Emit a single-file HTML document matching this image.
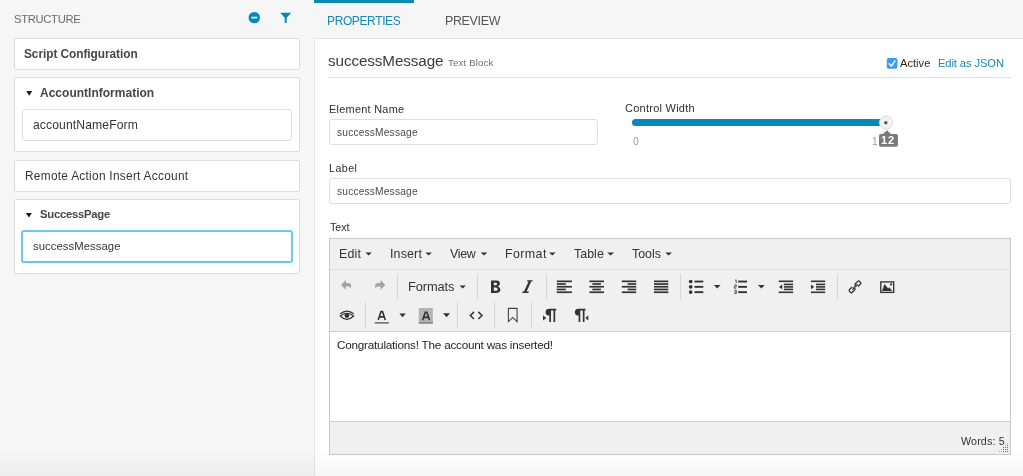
<!DOCTYPE html>
<html><head><meta charset="utf-8">
<style>
*{box-sizing:border-box;margin:0;padding:0}
html,body{width:1023px;height:476px;overflow:hidden;background:#f6f6f6;font-family:"Liberation Sans",sans-serif;color:#333}
.b{position:absolute}
.t{position:absolute;white-space:nowrap;line-height:1;will-change:transform;font-family:"Liberation Sans",sans-serif}
.card{position:absolute;left:14px;width:286px;background:#fff;border:1px solid #dbdbdb;border-radius:2px}
.inp{position:absolute;background:#fff;border:1px solid #dedede;border-radius:3px}
svg.ov{position:absolute;left:0;top:0}
</style></head><body>

<!-- LEFT cards -->
<div class="card" style="top:38px;height:32px"></div>
<div class="card" style="top:77px;height:75px"></div>
<div class="inp" style="left:22px;top:109px;width:270px;height:32px"></div>
<div class="card" style="top:160px;height:32px"></div>
<div class="card" style="top:199px;height:75px"></div>
<div class="inp" style="left:21px;top:230px;width:272px;height:33px;border:2px solid #68cbee;border-radius:3px"></div>

<!-- RIGHT -->
<div class="b" style="left:314px;top:0;width:100px;height:3px;background:#0589b6"></div>
<div class="b" style="left:314px;top:38px;width:720px;height:450px;background:#fff;border:1px solid #e3e3e3"></div>
<div class="b" style="left:329px;top:77px;width:682px;height:1px;background:#dfdfdf"></div>

<div class="inp" style="left:329px;top:119px;width:269px;height:26px"></div>
<div class="inp" style="left:329px;top:178px;width:682px;height:26px"></div>

<div class="b" style="left:632px;top:119px;width:252px;height:7px;background:#0589b6;border-radius:3.5px"></div>

<!-- editor -->
<div class="b" style="left:329px;top:238px;width:682px;height:217px;background:#f0f0f0;border:1px solid #c9c9c9"></div>
<div class="b" style="left:330px;top:269px;width:680px;height:1px;background:#dedede"></div>
<div class="b" style="left:330px;top:331px;width:680px;height:91px;background:#fff;border-top:1px solid #cdcdcd;border-bottom:1px solid #cdcdcd"></div>

<svg class="ov" width="1023" height="476" viewBox="0 0 1023 476">
  <!-- structure icons -->
  <circle cx="254.3" cy="17.6" r="5.7" fill="#0589b6"/>
  <rect x="251.3" y="16.7" width="6" height="1.8" fill="#d8eef6"/>
  <path d="M280.2 12.8 H291.2 L286.7 17.8 V22.4 Q286.7 23 285.7 23 Q284.7 23 284.7 22.4 V17.8 Z" fill="#0589b6"/>
  <!-- triangles -->
  <path d="M26.2 91 H32.3 L29.25 95.7 Z" fill="#1e1e1e"/>
  <path d="M25.9 213.1 H31.9 L28.9 217.4 Z" fill="#1e1e1e"/>
  <!-- checkbox -->
  <rect x="886.8" y="58" width="10.7" height="10.8" rx="2" fill="#3d9bf7"/>
  <path d="M889.1 63.7 L891.4 66.1 L895 60.9" stroke="#fff" stroke-width="1.4" fill="none" stroke-linecap="round" stroke-linejoin="round"/>
  <!-- slider handle -->
  <circle cx="886" cy="122.6" r="6.6" fill="#f2f2f2" stroke="#d9d9d9" stroke-width="0.9"/>
  <circle cx="885.8" cy="122.8" r="1.75" fill="#5a5a5a"/>
  <path d="M879 136 Q879 134 881 134 H883 L887 130.2 L891 134 H896 Q898 134 898 136 V144.7 Q898 146.7 896 146.7 H881 Q879 146.7 879 144.7 Z" fill="#7a7a7a"/>

  <!-- menubar carets -->
  <g fill="#333">
    <path d="M365.4 252.6 H371.8 L368.6 255.4 Z"/>
    <path d="M425.4 252.6 H431.9 L428.65 255.4 Z"/>
    <path d="M480.7 252.6 H487.4 L484.05 255.4 Z"/>
    <path d="M549 252.6 H555.6 L552.3 255.4 Z"/>
    <path d="M607.2 252.6 H614 L610.6 255.4 Z"/>
    <path d="M665.3 252.6 H671.9 L668.6 255.4 Z"/>
    <!-- toolbar carets -->
    <path d="M459.5 285.4 H465.9 L462.7 288.4 Z"/>
    <path d="M713.8 284.9 H720.6 L717.2 288.6 Z"/>
    <path d="M758 284.9 H764.7 L761.35 288.6 Z"/>
    <path d="M399.3 313.5 H405.8 L402.55 317.3 Z"/>
    <path d="M443 313.3 H450 L446.5 317.2 Z"/>
  </g>
  <!-- separators -->
  <g fill="#d6d6d6">
    <rect x="397" y="274" width="1" height="26"/>
    <rect x="477" y="274" width="1" height="26"/>
    <rect x="546" y="274" width="1" height="26"/>
    <rect x="680" y="274" width="1" height="26"/>
    <rect x="837" y="274" width="1" height="26"/>
    <rect x="365" y="302" width="1" height="26"/>
    <rect x="457" y="302" width="1" height="26"/>
    <rect x="494" y="302" width="1" height="26"/>
    <rect x="531" y="302" width="1" height="26"/>
  </g>
  <!-- undo / redo -->
  <path d="M341 284.9 L345.8 279.9 V283.1 H348.4 Q351.1 283.3 351.1 285.8 V288.6 Q350.2 286.6 348 286.6 H345.8 V289.8 Z" fill="#a3a3a3"/>
  <path d="M385.3 284.9 L380.5 279.9 V283.1 H377.9 Q375.2 283.3 375.2 285.8 V288.6 Q376.1 286.6 378.3 286.6 H380.5 V289.8 Z" fill="#a3a3a3"/>
  <!-- align icons -->
  <g fill="#333">
    <rect x="556.8" y="280.5" width="15.1" height="1.7"/><rect x="556.8" y="283.2" width="9" height="1.7"/><rect x="556.8" y="285.9" width="15.1" height="1.7"/><rect x="556.8" y="288.6" width="9" height="1.7"/><rect x="556.8" y="291.4" width="15.1" height="1.7"/>
    <rect x="589.4" y="280.5" width="14.6" height="1.7"/><rect x="592.4" y="283.2" width="8.5" height="1.7"/><rect x="589.4" y="285.9" width="14.6" height="1.7"/><rect x="592.4" y="288.6" width="8.5" height="1.7"/><rect x="589.4" y="291.4" width="14.6" height="1.7"/>
    <rect x="621.8" y="280.5" width="14.4" height="1.7"/><rect x="627.6" y="283.2" width="8.6" height="1.7"/><rect x="621.8" y="285.9" width="14.4" height="1.7"/><rect x="627.6" y="288.6" width="8.6" height="1.7"/><rect x="621.8" y="291.4" width="14.4" height="1.7"/>
    <rect x="654" y="280.5" width="14.3" height="1.7"/><rect x="654" y="283.2" width="14.3" height="1.7"/><rect x="654" y="285.9" width="14.3" height="1.7"/><rect x="654" y="288.6" width="14.3" height="1.7"/><rect x="654" y="291.4" width="14.3" height="1.7"/>
    <!-- bullist -->
    <circle cx="690.7" cy="281.5" r="1.85"/><circle cx="690.7" cy="286.8" r="1.85"/><circle cx="690.7" cy="292.1" r="1.85"/>
    <rect x="694.5" y="280.6" width="8.8" height="1.9"/><rect x="694.5" y="285.9" width="8.8" height="1.9"/><rect x="694.5" y="291.2" width="8.8" height="1.9"/>
    <!-- numlist -->
    <rect x="738.2" y="280.6" width="8.8" height="1.9"/><rect x="738.2" y="285.9" width="8.8" height="1.9"/><rect x="738.2" y="291.2" width="8.8" height="1.9"/>
    <!-- outdent / indent -->
    <rect x="778.7" y="280.5" width="14.4" height="1.6"/><rect x="783.9" y="283.6" width="9.2" height="1.6"/><rect x="783.9" y="286.1" width="9.2" height="1.6"/><rect x="783.9" y="288.6" width="9.2" height="1.6"/><rect x="778.7" y="291.5" width="14.4" height="1.6"/>
    <path d="M782.2 284.6 V289.2 L779 286.9 Z"/>
    <rect x="810.9" y="280.5" width="14.3" height="1.6"/><rect x="816" y="283.6" width="9.2" height="1.6"/><rect x="816" y="286.1" width="9.2" height="1.6"/><rect x="816" y="288.6" width="9.2" height="1.6"/><rect x="810.9" y="291.5" width="14.3" height="1.6"/>
    <path d="M811 284.6 V289.2 L814.2 286.9 Z"/>
    <!-- image -->
    <path d="M882.1 290.9 L884.5 284.1 L888.1 288.5 L889.3 287.2 L892.2 290.9 Z"/>
    <circle cx="891.1" cy="284.4" r="1.15"/>
  </g>
  <g fill="none" stroke="#333">
    <!-- numlist digits -->
    <path d="M735 280.3 L736.2 279.8 V283" stroke-width="0.8"/>
    <path d="M734.3 285 H736.3 V286.6 H734.3 V288.2 H736.3" stroke-width="0.8"/>
    <path d="M734.3 290.3 H736.3 V293.6 H734.3 M734.3 292 H736.3" stroke-width="0.8"/>
    <!-- link -->
    <g transform="translate(855 286.8) rotate(-45)" stroke-width="1.3" stroke-linecap="round">
      <path d="M1.1 0.2 Q1.1 -1.9 2.3 -1.9 H5.8 Q7.1 -1.9 7.1 -0.6 V0.6 Q7.1 1.9 5.8 1.9 H2.6"/>
      <path d="M-1.1 -0.2 Q-1.1 1.9 -2.3 1.9 H-5.8 Q-7.1 1.9 -7.1 0.6 V-0.6 Q-7.1 -1.9 -5.8 -1.9 H-2.6"/>
      <path d="M-3.2 0 H3.2" stroke-width="1.2"/>
    </g>
    <!-- image frame -->
    <rect x="880.8" y="281.9" width="12.9" height="10.5" stroke-width="1.35"/>
    <!-- eye -->
    <path d="M340.2 316 Q346.9 310.4 353.7 316 Q346.9 322.6 340.2 316 Z" stroke-width="1.1"/>
    <path d="M340.2 313.8 Q346.9 308.4 353.7 313.8" stroke-width="1.1"/>
    <!-- code -->
    <path d="M474 311.9 L470.4 315.45 L474 319 M478.4 311.9 L482 315.45 L478.4 319" stroke-width="1.5"/>
    <!-- bookmark -->
    <path d="M508.4 308.4 H517.1 V321.6 L512.75 317.4 L508.4 321.6 Z" stroke="#444" stroke-width="1.1"/>
    <!-- forecolor A -->
    <path d="M378.2 319.9 L381 311.6 H382.5 L385.3 319.9 M379.5 316.9 H384" stroke-width="1.6"/>
  </g>
  <circle cx="346.9" cy="315.6" r="2.4" fill="#333"/>
  <rect x="374.7" y="322" width="14.1" height="1.7" fill="#777"/>
  <rect x="418.8" y="308" width="14.1" height="14.1" fill="#b5b5b5"/>
  <rect x="418.8" y="322" width="14.1" height="1.8" fill="#8a8a8a"/>
  <path d="M422.5 320.3 L425.3 312.2 H426.8 L429.6 320.3 M423.8 317.4 H428.3" stroke="#333" stroke-width="1.6" fill="none"/>
  <!-- pilcrows -->
  <g fill="#333">
    <path d="M543 315.2 L546.3 317.9 L543 320.6 Z"/>
    <path d="M549.3 308.8 H556.2 V310.6 H555.2 V322 H553.5 V310.6 H551 V322 H549.3 V315.6 Q545.6 315.6 545.6 312.2 Q545.6 308.8 549.3 308.8 Z"/>
    <path d="M578.6 308.8 H585.5 V310.6 H584.5 V322 H582.8 V310.6 H580.3 V322 H578.6 V315.6 Q574.9 315.6 574.9 312.2 Q574.9 308.8 578.6 308.8 Z"/>
    <path d="M588.3 315.2 L585.4 317.9 L588.3 320.6 Z"/>
    <!-- bold B -->
    <path fill-rule="evenodd" d="M491 280.5 H496.3 Q499.9 280.5 499.9 283.6 Q499.9 285.7 497.9 286.4 Q500.4 287.1 500.4 289.6 Q500.4 292.9 496.5 292.9 H491 Z M493.8 282.7 H495.7 Q497.1 282.7 497.1 283.9 Q497.1 285.3 495.7 285.3 H493.8 Z M493.8 287.5 H496 Q497.6 287.5 497.6 289.2 Q497.6 290.8 496 290.8 H493.8 Z"/>
    <path d="M527.3 280.2 H532.7 L532.4 281.5 H531.2 L526.6 291.6 H528.8 L528.5 292.9 H522.2 L522.5 291.6 H524 L528.6 281.5 H527 Z"/>
  </g>
  <!-- resize handle dots -->
  <rect x="999" y="451" width="1" height="1" fill="#a8a8a8"/><rect x="1001" y="451" width="1" height="1" fill="#a8a8a8"/><rect x="1003" y="451" width="1" height="1" fill="#6a6a6a"/><rect x="1005" y="451" width="1" height="1" fill="#6a6a6a"/><rect x="1007" y="451" width="1" height="1" fill="#6a6a6a"/><rect x="1001" y="449" width="1" height="1" fill="#a8a8a8"/><rect x="1003" y="449" width="1" height="1" fill="#6a6a6a"/><rect x="1005" y="449" width="1" height="1" fill="#6a6a6a"/><rect x="1007" y="449" width="1" height="1" fill="#6a6a6a"/><rect x="1003" y="447" width="1" height="1" fill="#6a6a6a"/><rect x="1005" y="447" width="1" height="1" fill="#6a6a6a"/><rect x="1007" y="447" width="1" height="1" fill="#6a6a6a"/><rect x="1005" y="445" width="1" height="1" fill="#a8a8a8"/><rect x="1007" y="445" width="1" height="1" fill="#6a6a6a"/><rect x="1007" y="443" width="1" height="1" fill="#a8a8a8"/>
</svg>


<div class="t" style="left:13.50px;top:13.60px;font-size:11.2px;letter-spacing:-0.287px;font-weight:400;color:#6b6b6b">STRUCTURE</div>
<div class="t" style="left:24.30px;top:48.70px;font-size:11.87px;letter-spacing:-0.053px;font-weight:700;color:#474747">Script Configuration</div>
<div class="t" style="left:40.20px;top:87.20px;font-size:12.01px;letter-spacing:0.012px;font-weight:700;color:#474747">AccountInformation</div>
<div class="t" style="left:33.40px;top:118.60px;font-size:12.15px;letter-spacing:0.114px;font-weight:400;color:#353535">accountNameForm</div>
<div class="t" style="left:24.60px;top:171.00px;font-size:11.87px;letter-spacing:0.281px;font-weight:400;color:#353535">Remote Action Insert Account</div>
<div class="t" style="left:40.40px;top:208.90px;font-size:11.3px;letter-spacing:-0.26px;font-weight:700;color:#474747">SuccessPage</div>
<div class="t" style="left:33.40px;top:240.90px;font-size:11.31px;letter-spacing:0.062px;font-weight:400;color:#353535">successMessage</div>
<div class="t" style="left:326.70px;top:14.70px;font-size:12px;letter-spacing:-0.378px;font-weight:400;color:#1589b8">PROPERTIES</div>
<div class="t" style="left:444.80px;top:14.90px;font-size:12.43px;letter-spacing:-0.317px;font-weight:400;color:#555555">PREVIEW</div>
<div class="t" style="left:328.20px;top:52.50px;font-size:15.22px;letter-spacing:-0.092px;font-weight:400;color:#3a3a3a">successMessage</div>
<div class="t" style="left:448.00px;top:58.00px;font-size:9.78px;letter-spacing:0.111px;font-weight:400;color:#6e6e6e">Text Block</div>
<div class="t" style="left:900.00px;top:58.00px;font-size:11.17px;letter-spacing:0.0px;font-weight:400;color:#2a2a2a">Active</div>
<div class="t" style="left:938.00px;top:58.00px;font-size:11.17px;letter-spacing:-0.091px;font-weight:400;color:#1589b8">Edit as JSON</div>
<div class="t" style="left:328.70px;top:103.70px;font-size:10.9px;letter-spacing:0.273px;font-weight:400;color:#2e2e2e">Element Name</div>
<div class="t" style="left:337.00px;top:128.40px;font-size:10.2px;letter-spacing:0.185px;font-weight:400;color:#4a4a4a">successMessage</div>
<div class="t" style="left:625.00px;top:103.30px;font-size:11px;letter-spacing:0.25px;font-weight:400;color:#2e2e2e">Control Width</div>
<div class="t" style="left:633.00px;top:136.70px;font-size:10.2px;letter-spacing:0.0px;font-weight:400;color:#9a9a9a">0</div>
<div class="t" style="left:871.80px;top:136.70px;font-size:10.06px;letter-spacing:0px;font-weight:400;color:#9a9a9a">1</div>
<div class="t" style="left:881.00px;top:135.30px;font-size:11px;letter-spacing:0.8px;font-weight:700;color:#ffffff">12</div>
<div class="t" style="left:328.50px;top:162.80px;font-size:10.6px;letter-spacing:0.5px;font-weight:400;color:#2e2e2e">Label</div>
<div class="t" style="left:337.00px;top:187.40px;font-size:10.2px;letter-spacing:0.185px;font-weight:400;color:#4a4a4a">successMessage</div>
<div class="t" style="left:329.50px;top:221.60px;font-size:10.8px;letter-spacing:-0.133px;font-weight:400;color:#2e2e2e">Text</div>
<div class="t" style="left:339.40px;top:248.20px;font-size:12.43px;letter-spacing:0.2px;font-weight:400;color:#333333">Edit</div>
<div class="t" style="left:389.60px;top:248.20px;font-size:12.43px;letter-spacing:0.16px;font-weight:400;color:#333333">Insert</div>
<div class="t" style="left:450.40px;top:248.20px;font-size:12.43px;letter-spacing:-0.3px;font-weight:400;color:#333333">View</div>
<div class="t" style="left:504.50px;top:248.20px;font-size:12.43px;letter-spacing:0.4px;font-weight:400;color:#333333">Format</div>
<div class="t" style="left:574.40px;top:248.20px;font-size:12.43px;letter-spacing:0.025px;font-weight:400;color:#333333">Table</div>
<div class="t" style="left:632.20px;top:248.20px;font-size:12.43px;letter-spacing:0.0px;font-weight:400;color:#333333">Tools</div>
<div class="t" style="left:408.40px;top:281.00px;font-size:12.85px;letter-spacing:-0.1px;font-weight:400;color:#333333">Formats</div>
<div class="t" style="left:336.60px;top:339.30px;font-size:11.73px;letter-spacing:-0.224px;font-weight:400;color:#1f1f1f">Congratulations! The account was inserted!</div>
<div class="t" style="left:960.80px;top:435.80px;font-size:10.75px;letter-spacing:0.114px;font-weight:400;color:#333333">Words: 5</div>

<!-- bottom fade -->
<div class="b" style="left:0;top:448px;width:1023px;height:28px;background:linear-gradient(to bottom, rgba(0,0,0,0) 0%, rgba(0,0,0,0.015) 50%, rgba(0,0,0,0.035) 100%)"></div>
</body></html>
